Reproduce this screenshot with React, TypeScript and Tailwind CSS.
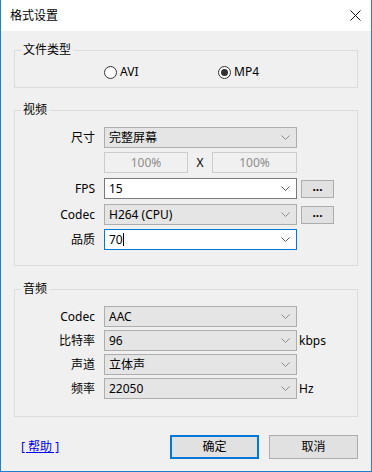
import React from 'react';

type ComboKind = 'gray' | 'white' | 'focus';

function Chevron({ light }: { light?: boolean }) {
    return (
        <svg width="9" height="5" viewBox="0 0 9 5" className="shrink-0">
            <polyline points="0.5,0.5 4.5,4.5 8.5,0.5" fill="none" stroke={light ? '#8a8a8a' : '#555'} strokeWidth="1" />
        </svg>
    );
}

function Combo({ value, kind = 'gray', caret }: { value: string; kind?: ComboKind; caret?: boolean }) {
    const box =
        kind === 'white'
            ? 'bg-white border-[#7a7a7a]'
            : kind === 'focus'
              ? 'bg-white border-[#0078d7]'
              : 'bg-[#e5e5e5] border-[#adadad]';
    return (
        <div className={`w-[193px] h-[21px] border flex items-center justify-between pl-[4px] pr-[6px] ${box}`}>
            <span className="flex items-center leading-none">
                {value}
                {caret && <span className="inline-block w-px h-[13px] bg-black" />}
            </span>
            <Chevron light={kind === 'gray'} />
        </div>
    );
}

function Row({ label, children, extra, className = '' }: { label: string; children: React.ReactNode; extra?: React.ReactNode; className?: string }) {
    return (
        <div className={`flex items-center h-[21px] ${className}`}>
            <div className="w-[81px] text-right pr-[1px]">{label}</div>
            <div className="ml-[8px]">{children}</div>
            {extra}
        </div>
    );
}

function DotsButton() {
    return (
        <div className="ml-[4px] w-[33px] h-[18px] border border-[#adadad] bg-[#e1e1e1] flex items-center justify-center leading-none pb-[3px] font-bold">
            ...
        </div>
    );
}

function Radio({ label, checked }: { label: string; checked?: boolean }) {
    return (
        <div className="flex items-center gap-[3px]">
            <span className="w-[13px] h-[13px] rounded-full border border-[#333] bg-white flex items-center justify-center">
                {checked && <span className="w-[7px] h-[7px] rounded-full bg-[#333]" />}
            </span>
            <span>{label}</span>
        </div>
    );
}

export default function App() {
    return (
        <div className="w-[372px] h-[472px] flex flex-col bg-[#f0f0f0] border-x border-b border-[#1f7fd1] font-['Noto_Sans','Noto_Sans_CJK_SC',sans-serif] text-[12px] text-black">
            {/* Title bar */}
            <div className="h-[31px] bg-white flex items-center justify-between pl-[9px] pr-[10px] shrink-0">
                <span>格式设置</span>
                <svg width="11" height="11" viewBox="0 0 11 11">
                    <path d="M0.5 0.5 L10.5 10.5 M10.5 0.5 L0.5 10.5" stroke="#111" strokeWidth="1" />
                </svg>
            </div>

            <div className="flex flex-col px-[13px]">
                {/* File type */}
                <fieldset className="mt-[11px] border border-[#dcdcdc] pt-[6px] pb-[7px]">
                    <legend className="ml-[6px] px-[2px] leading-[16px]">文件类型</legend>
                    <div className="flex items-center h-[16px] pl-[89px]">
                        <div className="w-[114px]">
                            <Radio label="AVI" />
                        </div>
                        <Radio label="MP4" checked />
                    </div>
                </fieldset>

                {/* Video */}
                <fieldset className="mt-[14px] border border-[#dcdcdc] pt-[9px] pb-[15px]">
                    <legend className="ml-[6px] px-[2px] leading-[16px]">视频</legend>
                    <Row label="尺寸">
                        <Combo value="完整屏幕" />
                    </Row>
                    <Row label="" className="mt-[4px]">
                        <div className="flex items-center">
                            <div className="w-[84px] h-[21px] border border-[#cccccc] bg-[#f0f0f0] text-[#8d8d8d] flex items-center justify-center">
                                100%
                            </div>
                            <div className="w-[24px] text-center">X</div>
                            <div className="w-[85px] h-[21px] border border-[#cccccc] bg-[#f0f0f0] text-[#8d8d8d] flex items-center justify-center">
                                100%
                            </div>
                        </div>
                    </Row>
                    <Row label="FPS" className="mt-[5px]" extra={<DotsButton />}>
                        <Combo value="15" kind="white" />
                    </Row>
                    <Row label="Codec" className="mt-[5px]" extra={<DotsButton />}>
                        <Combo value="H264 (CPU)" />
                    </Row>
                    <Row label="品质" className="mt-[4px]">
                        <Combo value="70" kind="focus" caret />
                    </Row>
                </fieldset>

                {/* Audio */}
                <fieldset className="mt-[15px] border border-[#dcdcdc] pt-[9px] pb-[17px] flex flex-col gap-[3px]">
                    <legend className="ml-[6px] px-[2px] leading-[16px]">音频</legend>
                    <Row label="Codec">
                        <Combo value="AAC" />
                    </Row>
                    <Row label="比特率" extra={<span className="ml-[2px]">kbps</span>}>
                        <Combo value="96" />
                    </Row>
                    <Row label="声道">
                        <Combo value="立体声" />
                    </Row>
                    <Row label="频率" extra={<span className="ml-[2px]">Hz</span>}>
                        <Combo value="22050" />
                    </Row>
                </fieldset>

                {/* Footer */}
                <div className="mt-[18px] flex items-center justify-between">
                    <a className="ml-[7px] text-[#0000ee] underline whitespace-pre">[ 帮助 ]</a>
                    <div className="flex gap-[10px]">
                        <button className="w-[89px] h-[24px] border-2 border-[#0078d7] bg-[#e1e1e1]">确定</button>
                        <button className="w-[89px] h-[24px] border border-[#adadad] bg-[#e1e1e1]">取消</button>
                    </div>
                </div>
            </div>
        </div>
    );
}
